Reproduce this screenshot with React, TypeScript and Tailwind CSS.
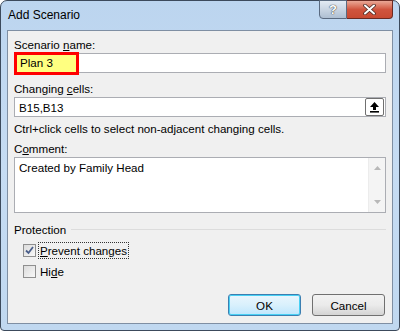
import React from 'react';

const font = { fontFamily: '"Segoe UI", "Liberation Sans", Arial, sans-serif' };

const Box = ({ checked }: { checked?: boolean }) => (
  <div className="w-[13px] h-[13px] border border-[#8f8f8f] bg-gradient-to-br from-[#dcdcdc] to-[#f8f8f8] flex items-center justify-center shrink-0">
    {checked && (
      <svg width="9" height="9" viewBox="0 0 9 9">
        <path d="M1 4.5 L3.5 7 L8 1" fill="none" stroke="#4a5e8a" strokeWidth="1.8" />
      </svg>
    )}
  </div>
);

export default function App() {
  return (
    <div className="w-[400px] h-[332px] bg-white text-[12px] text-black leading-[15px]" style={font}>
      <div className="h-[331px] rounded-t-[7px] rounded-b-[4px] border border-[#3c4a5c] bg-gradient-to-b from-[#bcd5ef] via-[#c6dcf3] to-[#c0d8f0] flex flex-col">
        {/* title bar */}
        <div className="h-[29px] flex items-start justify-between shrink-0">
          <span className="pl-[7px] pt-[7px] text-[12px]">Add Scenario</span>
          <div className="flex mr-[6px] -mt-[1px]">
            <div className="w-[28px] h-[19px] rounded-bl-[4px] border border-[#5a6a80] bg-gradient-to-b from-[#e3ebf4] via-[#c9d5e3] to-[#aebfd2] flex items-center justify-center">
              <span className="text-[13px] font-bold text-white leading-none [text-shadow:0_0_1px_#333,0_0_1px_#333]">?</span>
            </div>
            <div className="w-[46px] h-[19px] rounded-br-[4px] border border-l-0 border-[#6b2a22] bg-gradient-to-b from-[#e9a796] via-[#d0543e] to-[#c84a32] flex items-center justify-center">
              <svg width="13" height="11" viewBox="0 0 13 11">
                <path d="M2 1.5 L11 9.5 M11 1.5 L2 9.5" stroke="#4a2a24" strokeWidth="3.6" strokeLinecap="round" />
                <path d="M2 1.5 L11 9.5 M11 1.5 L2 9.5" stroke="#ffffff" strokeWidth="2" strokeLinecap="round" />
              </svg>
            </div>
          </div>
        </div>

        {/* client area */}
        <div className="mx-[6px] h-[294px] border border-[#7f8fa3] bg-[#f0f0f0] px-[6px] pt-[6px] flex flex-col text-[11.6px]">
          <div>
            Scenario <span className="underline">n</span>ame:
          </div>
          <div className="relative mt-[1px] h-[20px] border border-[#abadb3] bg-white">
            <div className="absolute -left-[1px] -top-[2px] w-[65px] h-[23px] border-[3px] border-[#ff0000] bg-[#ffff80] pl-[3px] leading-[15px]">
              Plan 3
            </div>
          </div>

          <div className="mt-[8px]">
            Changing <span className="underline">c</span>ells:
          </div>
          <div className="mt-[1px] h-[20px] border border-[#abadb3] bg-white flex items-center justify-between pl-[4px] pr-[1px]">
            <span>B15,B13</span>
            <div className="w-[19px] h-[18px] rounded-[2px] border border-[#707070] bg-white flex items-center justify-center">
              <svg width="11" height="12" viewBox="0 0 11 12">
                <path d="M5.5 1 L10 6 L7 6 L7 9 L4 9 L4 6 L1 6 Z" fill="#000" />
                <rect x="1" y="10" width="9" height="1.6" fill="#000" />
              </svg>
            </div>
          </div>

          <div className="mt-[4px]">Ctrl+click cells to select non-adjacent changing cells.</div>

          <div className="mt-[5px]">
            C<span className="underline">o</span>mment:
          </div>
          <div className="mt-[1px] h-[56px] border border-[#abadb3] bg-white flex">
            <div className="flex-1 pl-[4px] pt-[2px]">Created by Family Head</div>
            <div className="w-[17px] bg-[#f4f4f4] border-l border-[#ececec] flex flex-col items-center justify-between py-[8px]">
              <svg width="7" height="4" viewBox="0 0 7 4"><path d="M0 4 L3.5 0 L7 4 Z" fill="#b8b8b8" /></svg>
              <svg width="7" height="4" viewBox="0 0 7 4"><path d="M0 0 L3.5 4 L7 0 Z" fill="#b8b8b8" /></svg>
            </div>
          </div>

          <div className="mt-[9px] flex items-center gap-[5px]">
            <span>Protection</span>
            <div className="flex-1 h-px bg-[#dcdcdc]" />
          </div>

          <div className="mt-[5px] pl-[9px] flex flex-col gap-[5px]">
            <div className="flex items-center gap-[2px]">
              <Box checked />
              <span className="border border-dotted border-[#333] px-[1px]">
                <span className="underline">P</span>revent changes
              </span>
            </div>
            <div className="flex items-center gap-[4px]">
              <Box />
              <span>
                Hi<span className="underline">d</span>e
              </span>
            </div>
          </div>

          <div className="mt-auto mb-[7px] flex justify-end gap-[11px] pr-[1px]">
            <button className="w-[73px] h-[22px] rounded-[3px] border border-[#3c7fb1] bg-gradient-to-b from-[#eaf6fd] via-[#d9f0fc] to-[#bee6fd] shadow-[inset_0_0_0_1px_#48d0f4]">
              OK
            </button>
            <button className="w-[73px] h-[22px] rounded-[3px] border border-[#707070] bg-gradient-to-b from-[#f2f2f2] via-[#ebebeb] to-[#d4d4d4]">
              Cancel
            </button>
          </div>
        </div>
      </div>
    </div>
  );
}
